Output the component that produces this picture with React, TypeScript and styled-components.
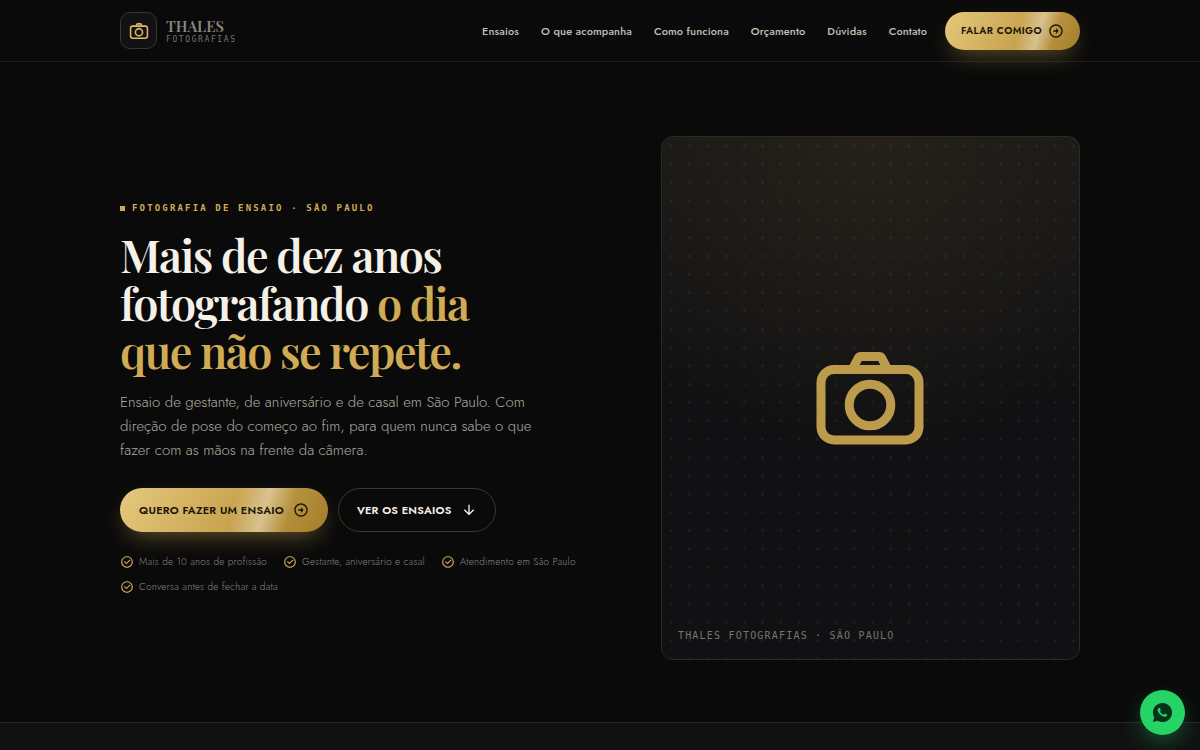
import React from "react";
import styled, { createGlobalStyle } from "styled-components";
import {
  RiArrowDownLine,
  RiArrowRightCircleLine,
  RiCheckboxCircleLine,
  RiWhatsappFill,
} from "react-icons/ri";

const serif = '"Playfair Display", "Liberation Serif", serif';
const sans = 'Jost, Lato, sans-serif';
const mono = '"DejaVu Sans Mono", monospace';

const GlobalStyle = createGlobalStyle`
  *, *::before, *::after { box-sizing: border-box; }
  body {
    margin: 0;
    background: #0a0a0a;
    color: #f5f1e8;
    font-family: ${sans};
    overflow-x: hidden;
  }
  a { color: inherit; text-decoration: none; }
  h1, p, ul { margin: 0; padding: 0; }
  ul { list-style: none; }
`;

const Container = styled.div`
  width: 100%;
  max-width: 1008px;
  margin: 0 auto;
  padding: 0 24px;
`;

const Header = styled.header`
  border-bottom: 1px solid #1e1e1d;
`;

const HeaderRow = styled(Container)`
  display: flex;
  align-items: flex-start;
  justify-content: space-between;
  padding-top: 12px;
  padding-bottom: 11px;
`;

const Brand = styled.a`
  display: flex;
  align-items: center;
  gap: 9px;
`;

const BrandMark = styled.span`
  display: grid;
  place-items: center;
  width: 37px;
  height: 37px;
  border: 1px solid #3d3526;
  border-radius: 10px;
  background: #121214;
  color: #dcb964;
`;

const BrandText = styled.span`
  display: flex;
  flex-direction: column;
`;

const BrandName = styled.span`
  font: 600 15px/18px ${serif};
  color: #8b867d;
`;

const BrandSub = styled.span`
  font: 400 8px/10px ${mono};
  letter-spacing: 0.2em;
  color: #77736c;
`;

const Nav = styled.nav`
  display: flex;
  align-items: center;
  gap: 22px;
`;

const NavLink = styled.a`
  font-size: 11px;
  line-height: 18px;
  font-weight: 500;
  letter-spacing: 0.01em;
  color: #c3beb4;
  white-space: nowrap;
`;

const Actions = styled.div`
  display: flex;
  align-items: center;
  gap: 18px;
`;

const PillButton = styled.button<{ $size?: "sm" | "md"; $ghost?: boolean }>`
  display: inline-flex;
  align-items: center;
  justify-content: center;
  gap: ${(p) => (p.$size === "sm" ? 6 : 9)}px;
  height: ${(p) => (p.$size === "sm" ? 38 : 44)}px;
  padding: 0 ${(p) => (p.$size === "sm" ? 15 : 18)}px;
  border: 1px solid ${(p) => (p.$ghost ? "#3f3627" : "transparent")};
  border-radius: 22px;
  font: 600 ${(p) => (p.$size === "sm" ? 10 : 11)}px/16px ${sans};
  letter-spacing: ${(p) => (p.$size === "sm" ? "0.04em" : "0.02em")};
  text-transform: uppercase;
  white-space: nowrap;
  cursor: pointer;
  color: ${(p) => (p.$ghost ? "#f5f1e8" : "#1b1406")};
  background: ${(p) =>
    p.$ghost
      ? "transparent"
      : `linear-gradient(107deg, transparent 54%, rgba(255, 255, 255, 0.4) 68%, transparent 80%) border-box,
         linear-gradient(120deg, #e5c97e 0%, #c9a450 55%, #a37d2a 100%) border-box`};
  box-shadow: ${(p) => (p.$ghost ? "none" : "0 10px 24px -8px rgba(212, 175, 85, 0.5)")};
`;

const Hero = styled.section`
  padding: 74px 0 62px;
`;

const HeroGrid = styled(Container)`
  display: grid;
  grid-template-columns: 1.15fr 1fr;
  align-items: center;
  gap: 59px;
`;

const Copy = styled.div`
  display: flex;
  flex-direction: column;
  align-items: flex-start;
`;

const Eyebrow = styled.p`
  display: flex;
  align-items: center;
  gap: 7px;
  font: 700 9px/16px ${mono};
  letter-spacing: 0.24em;
  text-transform: uppercase;
  color: #d0aa55;

  &::before {
    content: "";
    width: 5px;
    height: 5px;
    background: currentColor;
  }
`;

const Title = styled.h1`
  margin-top: 14px;
  font: 600 45px/48px ${serif};
  letter-spacing: -0.035em;
  color: #f5f1e8;

  em {
    font-style: normal;
    color: #d0aa55;
  }
`;

const Lead = styled.p`
  margin-top: 16px;
  font-size: 15px;
  line-height: 24px;
  font-weight: 300;
  color: #b0aba2;
`;

const ButtonRow = styled.div`
  display: flex;
  flex-wrap: wrap;
  gap: 10px;
  margin-top: 26px;
`;

const Perks = styled.ul`
  display: flex;
  flex-wrap: wrap;
  gap: 9px 16px;
  margin-top: 22px;
`;

const Perk = styled.li`
  display: flex;
  align-items: center;
  gap: 5px;
  font-size: 10px;
  line-height: 16px;
  font-weight: 300;
  letter-spacing: 0.02em;
  color: #8a867e;

  svg { color: #cdaa5c; }
`;

const Frame = styled.figure`
  display: grid;
  place-items: center;
  position: relative;
  margin: 0;
  aspect-ratio: 4 / 5;
  border: 1px solid #2d2a24;
  border-radius: 12px;
  background:
    radial-gradient(circle, rgba(255, 255, 255, 0.05) 1px, transparent 2px) 0 0 / 4.39% 3.51%,
    radial-gradient(ellipse 75% 60% at 50% 0%, #25211a, transparent),
    linear-gradient(180deg, #181817, #111113 50%);
  color: #bd9b4c;
`;

const Caption = styled.figcaption`
  position: absolute;
  left: 16px;
  bottom: 15px;
  font: 400 10px/16px ${mono};
  letter-spacing: 0.12em;
  text-transform: uppercase;
  color: #79756d;
`;

const Strip = styled.section`
  min-height: 120px;
  border-top: 1px solid #262522;
  background: #111113;
`;

const Page = styled.div`
  height: 100vh;
  overflow: hidden;
`;

const WhatsApp = styled.a`
  position: fixed;
  right: 15px;
  bottom: 15px;
  display: grid;
  place-items: center;
  width: 45px;
  height: 45px;
  border-radius: 50%;
  background: #25d366;
  color: #06331a;
  box-shadow: 0 8px 24px -6px rgba(37, 211, 102, 0.55);
`;

const CameraIcon = ({ size }: { size: number }) => (
  <svg width={size} height={size} viewBox="0 0 128 128" fill="none" stroke="currentColor" strokeWidth="9" strokeLinejoin="round" aria-hidden="true">
    <rect x="15" y="35.500" width="98" height="70.500" rx="13" />
    <circle cx="64" cy="71" r="20.800" />
    <path d="M46.500 35 52 24.500Q53 22.500 55 22.500H73Q75 22.500 76 24.500L81.500 35" />
  </svg>
);

const links = ["Ensaios", "O que acompanha", "Como funciona", "Orçamento", "Dúvidas", "Contato"];

const perks = [
  "Mais de 10 anos de profissão",
  "Gestante, aniversário e casal",
  "Atendimento em São Paulo",
  "Conversa antes de fechar a data",
];

export default function App() {
  return (
    <Page>
      <GlobalStyle />
      <Header>
        <HeaderRow>
          <Brand href="#">
            <BrandMark>
              <CameraIcon size={22} />
            </BrandMark>
            <BrandText>
              <BrandName>THALES</BrandName>
              <BrandSub>FOTOGRAFIAS</BrandSub>
            </BrandText>
          </Brand>
          <Actions>
            <Nav>
              {links.map((label) => (
                <NavLink key={label} href="#">{label}</NavLink>
              ))}
            </Nav>
            <PillButton $size="sm">
              Falar comigo
              <RiArrowRightCircleLine size={16} />
            </PillButton>
          </Actions>
        </HeaderRow>
      </Header>

      <main>
        <Hero>
          <HeroGrid>
            <Copy>
              <Eyebrow>Fotografia de ensaio · São Paulo</Eyebrow>
              <Title>
                Mais de dez anos
                <br />
                fotografando <em>o dia<br />que não se repete.</em>
              </Title>
              <Lead>
                Ensaio de gestante, de aniversário e de casal em São Paulo. Com
                <br />
                direção de pose do começo ao fim, para quem nunca sabe o que
                <br />
                fazer com as mãos na frente da câmera.
              </Lead>
              <ButtonRow>
                <PillButton>
                  Quero fazer um ensaio
                  <RiArrowRightCircleLine size={16} />
                </PillButton>
                <PillButton $ghost>
                  Ver os ensaios
                  <RiArrowDownLine size={16} />
                </PillButton>
              </ButtonRow>
              <Perks>
                {perks.map((perk) => (
                  <Perk key={perk}>
                    <RiCheckboxCircleLine size={14} />
                    {perk}
                  </Perk>
                ))}
              </Perks>
            </Copy>
            <Frame>
              <CameraIcon size={128} />
              <Caption>Thales Fotografias · São Paulo</Caption>
            </Frame>
          </HeroGrid>
        </Hero>
        <Strip />
      </main>

      <WhatsApp href="#" aria-label="WhatsApp">
        <RiWhatsappFill size={23} />
      </WhatsApp>
    </Page>
  );
}
